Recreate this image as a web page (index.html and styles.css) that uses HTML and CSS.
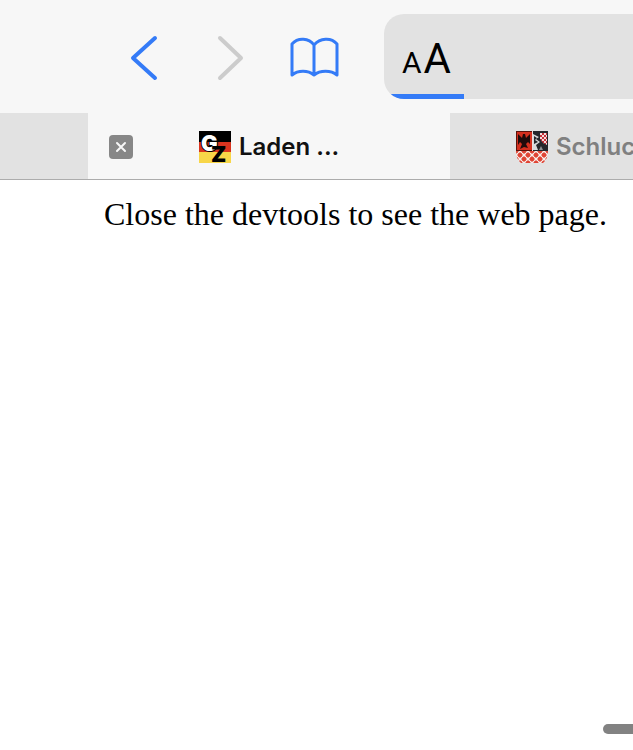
FILE: index.html
```html
<!DOCTYPE html>
<html lang="de">
<head>
    <meta charset="UTF-8">
    <meta name="viewport" content="width=device-width, initial-scale=1.0">
    <title>Laden ...</title>
    <link rel="stylesheet" href="styles.css">
</head>
<body>

<header>
    <nav class="toolbar">
        <button type="button" class="back" aria-label="Back">
            <svg width="30" height="50" viewBox="0 0 30 50"><path d="M27 6 L5 26 L27 46"/></svg>
        </button>
        <button type="button" class="forward" aria-label="Forward" disabled>
            <svg width="30" height="50" viewBox="0 0 30 50"><path d="M4 6 L25 26 L4 46"/></svg>
        </button>
        <button type="button" class="bookmarks" aria-label="Bookmarks">
            <svg width="50" height="42" viewBox="0 0 50 42">
                <path d="M25 9 C20 2 9 1 3 8 V39 C9 34 19 34 25 39 C31 34 42 34 48 39 V8 C42 1 31 2 25 9 V39"/>
            </svg>
        </button>
        <div class="address-bar">
            <button type="button" class="text-size" aria-label="Text size"><span class="small">A</span><span>A</span></button>
            <div class="loading"></div>
        </div>
    </nav>

    <div class="tabs">
        <div class="tab first"></div>
        <div class="tab active">
            <button type="button" class="close" aria-label="Close tab">
                <svg width="24" height="24" viewBox="0 0 24 24"><path d="M8 8 L16 16 M16 8 L8 16"/></svg>
            </button>
            <a href="#" class="tab-link">
                <svg class="favicon" width="32" height="32" viewBox="0 0 32 32">
                    <rect width="32" height="11" fill="#000"/>
                    <rect y="11" width="32" height="10" fill="#d9341f"/>
                    <rect y="21" width="32" height="11" fill="#f8d648"/>
                    <text class="letter-g" x="2" y="20">G</text>
                    <text class="letter-z" x="12" y="31">Z</text>
                </svg>
                <span>Laden ...</span>
            </a>
        </div>
        <div class="tab next">
            <a href="#" class="tab-link">
                <svg class="favicon" width="32" height="32" viewBox="0 0 32 32">
                    <defs>
                        <pattern id="lattice" width="8" height="8" x="0" y="20" patternUnits="userSpaceOnUse">
                            <rect width="8" height="8" fill="#f7efed"/>
                            <path d="M0 0 L8 8 M8 0 L0 8" stroke="#e9877c" stroke-width="1"/>
                            <path d="M4 1 L7 4 L4 7 L1 4 Z M0 -3 L3 0 L0 3 Z M8 -3 V3 L5 0 Z M0 5 L3 8 H0 Z M8 5 V8 H5 Z" fill="#e04434"/>
                        </pattern>
                        <pattern id="checks" width="4" height="4" patternUnits="userSpaceOnUse">
                            <rect width="4" height="4" fill="#f3dcdc"/>
                            <path d="M0 0 H2 V2 H0 Z M2 2 H4 V4 H2 Z" fill="#c72f38"/>
                        </pattern>
                    </defs>
                    <path d="M0 20 H32 Q32 28 27 32 H5 Q0 28 0 20" fill="url(#lattice)"/>
                    <rect width="16" height="20" fill="#d4301f"/>
                    <path d="M0 0 H16 V1 H1 V19 H16 V20 H0 Z" fill="#5c130c"/>
                    <path d="M2 3 L6 7 L7 3 H9 L10 7 L14 3 V13 L12 11 L10 13 L12 17 L8 16 L4 18 L6 13 L4 11 L2 14 Z" fill="#1f0b0b"/>
                    <rect x="16" width="1" height="20" fill="#e8e0e0"/>
                    <rect x="17" width="15" height="20" fill="#25262b"/>
                    <path d="M17 3 L23 6 L20 8 L24 11 L20 14 L22 19 H17 Z" fill="#d8dadd"/>
                    <path d="M18 5 L21 7 L19 9 L22 11 L18 13 Z" fill="#25262b"/>
                    <path d="M24 2 H31 V14 L27 12 L24 8 Z" fill="url(#checks)"/>
                    <path d="M23 19 L25 15 L27 19 Z" fill="#8e8f92"/>
                </svg>
                <span>Schluc</span>
            </a>
        </div>
    </div>
</header>

<main>
    <p>Close the devtools to see the web page.</p>
    <div class="scroll-thumb"></div>
</main>

</body>
</html>
```
FILE: styles.css
```css
* {
    box-sizing: border-box;
}
body {
    margin: 0;
    min-height: 100vh;
    display: flex;
    flex-direction: column;
    background-color: #fff;
    font-family: Inter, "Liberation Sans", sans-serif;
    overflow-x: hidden;
}
header {
    background-color: #f7f7f7;
}
button {
    display: flex;
    padding: 0;
    border: none;
    background: none;
    color: inherit;
    font-family: inherit;
    cursor: pointer;
}
svg {
    display: block;
    flex-shrink: 0;
}

/* Toolbar */
.toolbar {
    display: flex;
    align-items: center;
    height: 113px;
    padding-left: 128px;
}
.toolbar path {
    fill: none;
    stroke: #347bf7;
    stroke-width: 4;
    stroke-linecap: round;
    stroke-linejoin: round;
}
.forward {
    margin-left: 58px;
}
.toolbar .forward path {
    stroke: #cccccc;
}
.bookmarks {
    margin-left: 43px;
}
.toolbar .bookmarks path {
    stroke-width: 3;
}
.address-bar {
    flex: 1;
    display: flex;
    flex-direction: column;
    justify-content: space-between;
    height: 85px;
    margin-left: 45px;
    border-radius: 20px 0 0 20px;
    background-color: #e2e2e2;
    overflow: hidden;
}
.text-size {
    align-items: baseline;
    gap: 2px;
    padding: 21px 0 0 18px;
    color: #000;
    font-family: Roboto, sans-serif;
    font-size: 42px;
    line-height: 48px;
}
.text-size .small {
    font-size: 30px;
}
.loading {
    width: 80px;
    height: 5px;
    background-color: #347bf7;
}

/* Tabs */
.tabs {
    display: flex;
    height: 67px;
    border-bottom: 1px solid #acacac;
}
.tab {
    display: flex;
    align-items: center;
    padding-top: 2px;
    background-color: #e2e2e2;
}
.first {
    flex: 0 0 88px;
}
.active {
    flex: 0 0 362px;
    padding-left: 21px;
    gap: 66px;
    background-color: #f7f7f7;
}
.next {
    flex: 1;
    min-width: 0;
    padding-left: 66px;
    overflow: hidden;
}
.close {
    border-radius: 4px;
    background-color: #878787;
}
.close path {
    stroke: #f7f7f7;
    stroke-width: 2;
    stroke-linecap: round;
}
.tab-link {
    display: flex;
    align-items: center;
    gap: 8px;
    color: #111;
    font-size: 24px;
    font-weight: 600;
    line-height: 32px;
    text-decoration: none;
    white-space: nowrap;
}
.next .tab-link {
    color: #808080;
}
.favicon text {
    font-family: Inter, sans-serif;
    font-size: 22px;
    font-weight: 900;
}
.letter-g {
    fill: #fff;
    stroke: #000;
    stroke-width: 2;
    paint-order: stroke;
}
.letter-z {
    fill: #000;
}

/* Page */
main {
    flex: 1;
    display: flex;
    flex-direction: column;
    justify-content: space-between;
    padding: 16px 0 16px 104px;
}
main p {
    margin: 0;
    color: #000;
    font-family: "Liberation Serif", "Times New Roman", serif;
    font-size: 32px;
    line-height: 37px;
}
.scroll-thumb {
    align-self: flex-end;
    width: 30px;
    height: 10px;
    border-radius: 5px 0 0 5px;
    background-color: #828282;
}
```
